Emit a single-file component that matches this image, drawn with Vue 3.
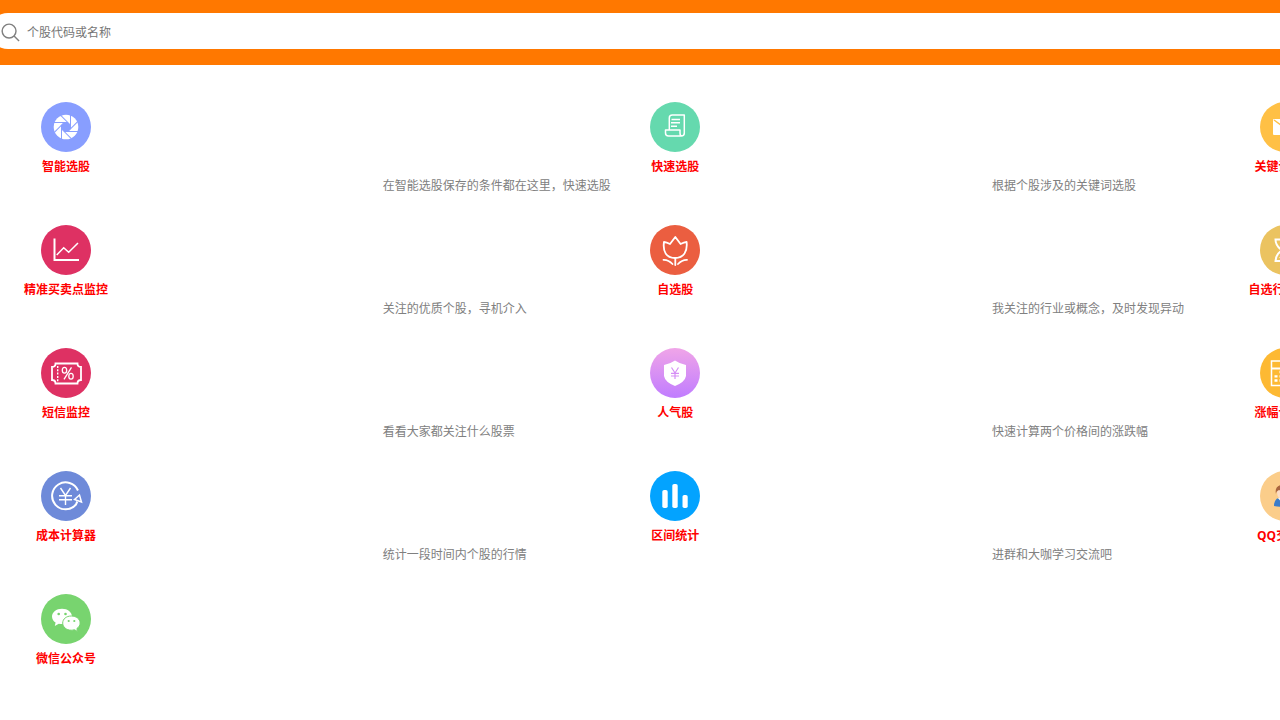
<script setup>
import { ref } from "vue";

const keyword = ref("");

// 光圈图标的叶片分割线
const blades = [0, 45, 90, 135, 180, 225, 270, 315]
  .map((deg) => `<path d="M27 20.500H13" transform="rotate(${deg} 25 25)"/>`)
  .join("");

// 功能入口
const menuList = [
  {
    title: "智能选股",
    desc: "按条件智能筛选个股",
    color: "#889eff",
    icon: `<circle cx="25" cy="25" r="12.300" fill="#fff"/>
      <path d="M23.100 20.500h3.800l2.600 2.600v3.800l-2.600 2.600h-3.800l-2.600-2.600v-3.800z" fill="#889eff"/>
      <g stroke="#889eff" stroke-width="1">${blades}</g>`,
  },
  {
    title: "快速选股",
    desc: "在智能选股保存的条件都在这里，快速选股",
    color: "#65d9ae",
    icon: `<g fill="none" stroke="#fff" stroke-width="1.500" stroke-linejoin="round">
        <path d="M19.300 28V16q0-3 3-3h12v18q0 3-3 3H18.500q-3 0-3-3v-3H30v3q0 3 2 3"/>
        <path d="M21.500 17.500H30M21 20.800H30M21 24.300H27"/>
      </g>`,
  },
  {
    title: "关键词选股",
    desc: "根据个股涉及的关键词选股",
    color: "#ffc045",
    icon: `<rect x="13" y="17" width="24" height="16" rx="1" fill="#fff"/>
      <path d="M14 18l11 8 11-8" fill="none" stroke="#ffc045" stroke-width="1.500"/>`,
  },
  {
    title: "精准买卖点监控",
    desc: "精准监控个股买卖点",
    color: "#de3163",
    icon: `<path d="M13.500 13.500V35H38" fill="none" stroke="#fff" stroke-width="2"/>
      <path d="M15.700 30l7-7.300 5 4.600L37 18" fill="none" stroke="#fff" stroke-width="1.500"/>`,
  },
  {
    title: "自选股",
    desc: "关注的优质个股，寻机介入",
    color: "#eb5e40",
    icon: `<g fill="none" stroke="#fff" stroke-width="1.800" stroke-linecap="round" stroke-linejoin="round">
        <path d="M14 17q2.500.200 6 2l5.300-7 5.300 7q3.500-1.800 6-2c1 9-2.500 16-11.600 16S12.700 26 14 17z"/>
        <path d="M25.300 33v7M13.500 34.800q5-.200 9 4.200M37 34.800q-5-.200-9 4.200"/>
      </g>`,
  },
  {
    title: "自选行业概念",
    desc: "我关注的行业或概念，及时发现异动",
    color: "#ebc360",
    icon: `<path d="M15.500 14.500h19c0 5-2.500 8-6.500 10.800 4 2.800 6.500 5.700 6.500 10.700h-19c0-5 2.500-8 6.500-10.700-4-2.800-6.500-5.800-6.500-10.800z" fill="none" stroke="#fff" stroke-width="2"/>
      <path d="M19 33q6-7 12 0z" fill="#fff"/>`,
  },
  {
    title: "短信监控",
    desc: "设置好监控条件后，触发时会有短信提醒",
    color: "#de3163",
    icon: `<path d="M14.500 15.500h22q0 3.500 3.500 3.500v13q-3.500 0-3.500 3.500h-22q0-3.500-3.500-3.500V19q3.500 0 3.500-3.500z" fill="none" stroke="#fff" stroke-width="1.800"/>
      <path d="M16.700 18v15.500" stroke="#fff" stroke-width="1.400" stroke-dasharray="2 1.300"/>
      <g fill="none" stroke="#fff" stroke-width="1.300"><ellipse cx="23.500" cy="22.300" rx="2.200" ry="2.900"/><ellipse cx="30" cy="28.200" rx="2.200" ry="2.900"/><path d="M30.500 19.300l-7.500 12"/></g>`,
  },
  {
    title: "人气股",
    desc: "看看大家都关注什么股票",
    color: "linear-gradient(#f0a5e8, #c07cff)",
    icon: `<path d="M25 12.500q5 3.500 11 4.500v11q-1 6-11 10-10-4-11-10V17q6-1 11-4.500z" fill="#fff"/>
      <path d="M21.500 19.500l3.500 5.500 3.500-5.500M25 25v6M21 25.300h8M21 28h8" fill="none" stroke="#d58ff5" stroke-width="1.200"/>`,
  },
  {
    title: "涨幅计算器",
    desc: "快速计算两个价格间的涨跌幅",
    color: "#fdb933",
    icon: `<rect x="11.500" y="13" width="26" height="24.500" fill="none" stroke="#fff" stroke-width="1.500"/>
      <path d="M11.500 20.500h26" stroke="#fff" stroke-width="1.800"/>
      <path d="M14.500 28.300h3M14.500 32.500h3M19.500 24h3M19.500 28.300h3M19.500 32.500h3M25 24h3M25 28.300h3M25 32.500h3M31 24h3M31 28.300h3M31 32.500h3" stroke="#fff" stroke-width="2.300"/>`,
  },
  {
    title: "成本计算器",
    desc: "计算个股持仓成本",
    color: "#6e8ad9",
    icon: `<path d="M37 19.500A13.500 13.500 0 1 0 35 33.500l1.300-3" fill="none" stroke="#fff" stroke-width="2"/>
      <path d="M33.500 28.500l5-4.500 2 7z" fill="#6e8ad9" stroke="#fff" stroke-width="1.500"/>
      <path d="M19.500 17l5 7.500 5-7.500M24.500 24.500V34M18 24.800h13M18 28.800h13" fill="none" stroke="#fff" stroke-width="1.400"/>`,
  },
  {
    title: "区间统计",
    desc: "统计一段时间内个股的行情",
    color: "#03a3ff",
    icon: `<g fill="#fff"><rect x="12.300" y="19" width="5.400" height="18" rx="1.800"/><rect x="22.300" y="13" width="5.400" height="24" rx="1.800"/><rect x="32.500" y="24" width="5.200" height="13" rx="1.800"/></g>`,
  },
  {
    title: "QQ交流群",
    desc: "进群和大咖学习交流吧",
    color: "#fbcd8a",
    icon: `<path d="M14 35q0-5 3-7.500l4-.500h8l4 .500q3 2.500 3 7.500-11 2-22 0z" fill="#3b7cc9"/>
      <path d="M18 27l7 9 7-9z" fill="#fff"/>
      <ellipse cx="25" cy="21.500" rx="8" ry="8" fill="#fbdcc8"/>
      <path d="M16 23q-2-9 8-9.500 12 0 10 9.500-1-4-4-5-6 3-11 1-3 1-3 4z" fill="#a9653f"/>`,
  },
  {
    title: "微信公众号",
    desc: "关注微信公众号",
    color: "#78d46f",
    icon: `<path d="M21 14.700c-5.700 0-10 3.400-10 7.800 0 2.600 1.400 4.700 3.600 6.100L13.800 32l4-2.200c8 1.500 13.200-2.500 13.200-7.300 0-4.400-4.300-7.800-10-7.800z" fill="#fff"/>
      <path d="M30.300 22c-5 0-8.600 3-8.600 7s3.600 7.200 8.600 7.200q1.500 0 3-.500l3.200 1.700-.600-2.900c2-1.300 3.200-3.200 3.200-5.500 0-4-3.800-7-8.800-7z" fill="#fff" stroke="#78d46f" stroke-width="1"/>
      <g fill="#78d46f"><circle cx="17.700" cy="20" r="1.300"/><circle cx="24.500" cy="20" r="1.300"/><circle cx="27.700" cy="27" r="1.100"/><circle cx="33.300" cy="27" r="1.100"/></g>`,
  },
];
</script>

<template>
  <div class="page">
    <div class="header">
      <label class="search">
        <svg class="search_icon" viewBox="0 0 20 20" aria-hidden="true">
          <circle cx="8.500" cy="8.500" r="7.300" />
          <path d="M13.500 13.500L19 19" />
        </svg>
        <input v-model="keyword" type="text" placeholder="个股代码或名称" aria-label="个股代码或名称" />
      </label>
    </div>
    <div class="menu">
      <a v-for="item in menuList" :key="item.title" class="menu_item" href="#">
        <svg
          class="icon"
          :style="{ background: item.color }"
          viewBox="0 0 50 50"
          aria-hidden="true"
          v-html="item.icon"
        ></svg>
        <div class="title">{{ item.title }}</div>
        <div class="desc">{{ item.desc }}</div>
      </a>
    </div>
  </div>
</template>

<style>
body {
  background-color: #fff;
}
</style>

<style scoped>
.page {
  overflow: hidden;
  font-family: "Open Sans", "Noto Sans CJK SC", sans-serif;
  font-size: 12px;
}
.header {
  padding: 13px 0 16px;
  background-color: #ff7800;
}
.search {
  display: flex;
  align-items: center;
  gap: 7px;
  height: 36px;
  margin: 0 -30px 0 -10px;
  padding: 0 11px;
  box-sizing: border-box;
  border-radius: 18px;
  background-color: #fff;
}
.search_icon {
  width: 19px;
  height: 19px;
  margin-top: 3px;
  fill: none;
  stroke: #808080;
  stroke-width: 1.5;
}
.search input {
  flex: 1;
  height: 36px;
  padding: 2px 0 0;
  box-sizing: border-box;
  border: 0;
  outline: none;
  background: none;
  font-family: inherit;
  font-size: 12px;
}
.search input::placeholder {
  color: #757575;
}
/* 三列比窗口宽，左右两侧超出部分隐藏 */
.menu {
  display: grid;
  grid-template-columns: repeat(3, 1fr);
  width: 142.8%;
  margin-left: -18.64%;
  padding: 22px 0;
}
.menu_item {
  display: flex;
  flex-direction: column;
  align-items: center;
  padding: 15px 12px 16px;
  text-decoration: none;
}
.icon {
  width: 50px;
  height: 50px;
  margin-bottom: 4px;
  border-radius: 50%;
}
.title {
  line-height: 22px;
  font-weight: bold;
  color: #f00;
}
.desc {
  align-self: stretch;
  line-height: 16px;
  color: #808080;
}
</style>
